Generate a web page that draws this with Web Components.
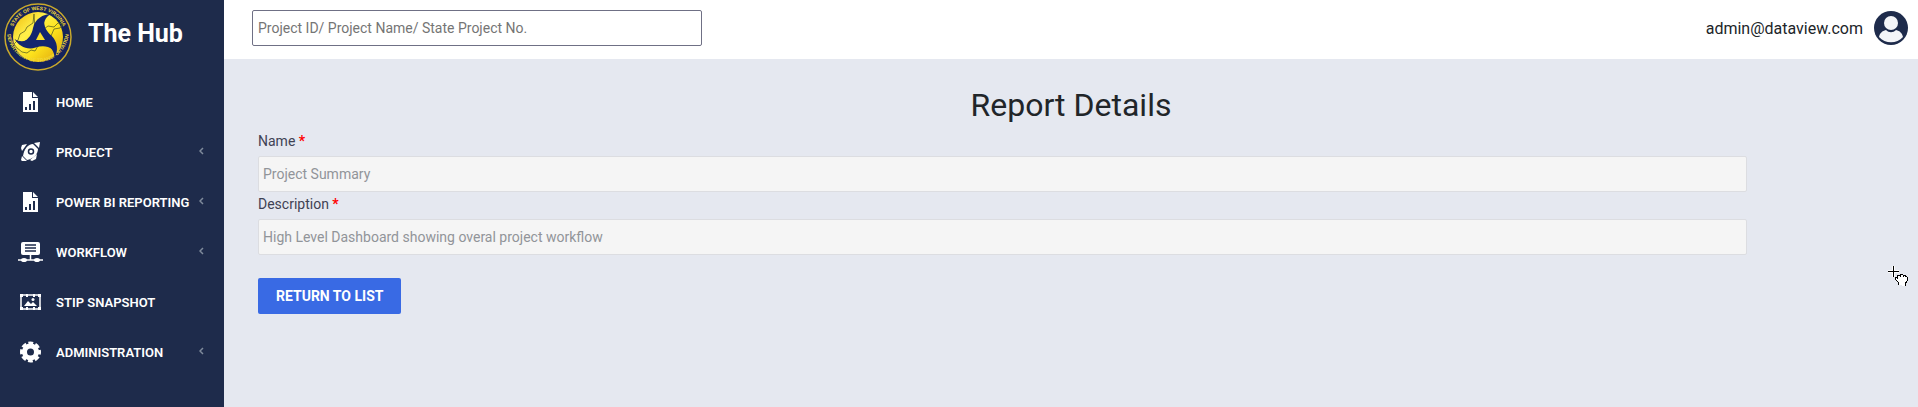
<!DOCTYPE html>
<html lang="en">
<head>
<meta charset="utf-8">
<meta name="viewport" content="width=device-width, initial-scale=1">
<title>The Hub - Report Details</title>
<style>
  body {
    margin: 0;
    font-family: Roboto, "Liberation Sans", sans-serif;
    font-size: 14px;
    color: #212529;
    background: #e5e8f0;
  }
</style>
</head>
<body>
<hub-app>
  <hub-sidebar slot="sidebar">
    <hub-nav-item icon="report">HOME</hub-nav-item>
    <hub-nav-item icon="rocket" expandable>PROJECT</hub-nav-item>
    <hub-nav-item icon="report" expandable>POWER BI REPORTING</hub-nav-item>
    <hub-nav-item icon="workflow" expandable>WORKFLOW</hub-nav-item>
    <hub-nav-item icon="snapshot">STIP SNAPSHOT</hub-nav-item>
    <hub-nav-item icon="gear" expandable>ADMINISTRATION</hub-nav-item>
  </hub-sidebar>
  <hub-topbar slot="topbar">admin@dataview.com</hub-topbar>
  <report-details>
    <hub-field label="Name" value="Project Summary"></hub-field>
    <hub-field label="Description" value="High Level Dashboard showing overal project workflow"></hub-field>
    <hub-button slot="actions">RETURN TO LIST</hub-button>
  </report-details>
  <hub-pointer></hub-pointer>
</hub-app>

<script>
class HubApp extends HTMLElement {
  constructor() {
    super();
    this.attachShadow({ mode: 'open' }).innerHTML = `
      <style>
        :host { display: flex; min-height: 100vh; }
        .body { flex: 1; min-width: 0; }
      </style>
      <slot name="sidebar"></slot>
      <div class="body">
        <slot name="topbar"></slot>
        <slot></slot>
      </div>
    `;
  }
}

// Round department seal: lettered ring, state outline and three-armed emblem
class HubSeal extends HTMLElement {
  constructor() {
    super();
    this.attachShadow({ mode: 'open' }).innerHTML = `
      <style>
        :host { display: block; }
        svg { display: block; }
        text { font: bold 5px "Liberation Sans", Arial, sans-serif; fill: #f2d93a; }
      </style>
      <svg width="68" height="68" viewBox="0 0 68 68" role="img" aria-label="Department seal">
        <defs>
          <linearGradient id="gold" x1="0" y1="0" x2="1" y2="1">
            <stop offset="0" stop-color="#eeb90a"/>
            <stop offset=".35" stop-color="#fff04a"/>
            <stop offset=".6" stop-color="#fde21c"/>
            <stop offset="1" stop-color="#dc9f0c"/>
          </linearGradient>
          <path id="top" d="M7 34a27 27 0 0 1 54 0"/>
          <path id="bottom" d="M3 28a31 31 0 1 0 62 0"/>
          <path id="arm" d="M11-23C3-23-5-18-7-9-8-3-11 2-17 5L-9 10C-1 6 5 0 4-8 3-14 5-20 11-23z"/>
        </defs>
        <circle cx="34" cy="34" r="33" fill="#14235a" stroke="#c9a92c" stroke-width="1.5"/>
        <circle cx="34" cy="34" r="25" fill="url(#gold)"/>
        <text><textPath href="#top" startOffset="50%" text-anchor="middle">STATE OF WEST VIRGINIA</textPath></text>
        <text><textPath href="#bottom" startOffset="50%" text-anchor="middle">DEPARTMENT OF TRANSPORTATION</textPath></text>
        <path d="M30 11l-1 9-6 4-2 4-5 3-2 6-4 4 3 4 5 4 5 1 4-3 4 1 3-5 6-2 3-6 4-2 3-7 6-1 3-4-5-1-4 4-6-1-4 3-9 1z" fill="none" stroke="#5f6421" stroke-width=".8"/>
        <g transform="translate(36 34)" fill="#13256f">
          <use href="#arm"/>
          <use href="#arm" transform="rotate(120)"/>
          <use href="#arm" transform="rotate(240)"/>
          <path d="M0-5L5 3-4 3z" fill="#fbe02a"/>
        </g>
      </svg>
    `;
  }
}

class HubSidebar extends HTMLElement {
  constructor() {
    super();
    this.attachShadow({ mode: 'open' }).innerHTML = `
      <style>
        :host { display: block; width: 224px; flex-shrink: 0; background: #1e2b4b; color: #fff; }
        .brand { display: flex; gap: 16px; padding: 3px 4px; }
        .name { font-size: 25px; line-height: 62px; font-weight: 700; }
        nav { padding-top: 3px; }
      </style>
      <div class="brand">
        <hub-seal></hub-seal>
        <div class="name">The Hub</div>
      </div>
      <nav><slot></slot></nav>
    `;
  }
}

const ICONS = {
  report: `<path fill="#fff" d="M7 2h9v6h6v14H7z M17 2l5 5h-5z"/>
    <path fill="#1e2b4b" d="M9 17h2v3H9z M13 14h2v6h-2z M17 11h2v9h-2z"/>`,
  rocket: `<g fill="#fff"><path d="M17 4l5 5c0 5-5 10-11 11l-4-4C8 9 12 4 17 4z"/>
    <path d="M18 3l6-1-1 6z"/>
    <path d="M6 5l5-1-5 7-1-3z M21 14l-1 5-4 2-2-1z M6 16l5 5-5 0-1-1z"/></g>
    <circle cx="15" cy="11.5" r="2.5" fill="none" stroke="#1e2b4b" stroke-width="1.5"/>`,
  workflow: `<rect x="5" y="2" width="19" height="13" rx="2" fill="#fff"/>
    <path d="M9 5h11M9 8h11M9 11h11" stroke="#1e2b4b" stroke-width="1.5"/>
    <path d="M14.5 15v5M2 20h25" stroke="#fff" stroke-width="1.5"/>
    <ellipse cx="8" cy="20" rx="3" ry="2" fill="#fff"/><ellipse cx="21" cy="20" rx="3" ry="2" fill="#fff"/>`,
  snapshot: `<rect x="5" y="5" width="19" height="14" fill="none" stroke="#fff" stroke-width="1.5"/>
    <path fill="#fff" d="M4 4h3v3H4z M22 4h3v3h-3z M4 17h3v3H4z M22 17h3v3h-3z M10 4h2v3h-2z M17 4h2v3h-2z M10 17h2v3h-2z M17 17h2v3h-2z"/>
    <path fill="#fff" d="M8 16l4-5 3 3 2-2 4 4z"/><circle cx="17" cy="9.5" r="1.5" fill="#fff"/>`,
  gear: `<circle cx="14.5" cy="12" r="6" fill="none" stroke="#fff" stroke-width="5"/>
    <circle cx="14.5" cy="12" r="8.5" fill="none" stroke="#fff" stroke-width="4" stroke-dasharray="4.5 2.175" stroke-dashoffset="2.25"/>`
};

class HubNavItem extends HTMLElement {
  connectedCallback() {
    const arrow = this.hasAttribute('expandable')
      ? '<svg class="arrow" width="5" height="8" viewBox="0 0 5 8"><path d="M4 1L1 4l3 3" fill="none" stroke="#7f8b9c" stroke-width="1.5"/></svg>'
      : '';
    this.attachShadow({ mode: 'open' }).innerHTML = `
      <style>
        :host { display: block; }
        a {
          display: flex;
          align-items: center;
          height: 50px;
          padding: 0 20px 0 16px;
          color: #fff;
          font-size: 13px;
          font-weight: 600;
          text-decoration: none;
          white-space: nowrap;
        }
        .icon { margin-right: 10px; flex-shrink: 0; }
        .arrow { margin-left: auto; padding-bottom: 2px; }
      </style>
      <a href="#">
        <svg class="icon" width="30" height="24" viewBox="0 0 30 24" aria-hidden="true">${ICONS[this.getAttribute('icon')]}</svg>
        <span><slot></slot></span>
        ${arrow}
      </a>
    `;
  }
}

class HubTopbar extends HTMLElement {
  constructor() {
    super();
    this.attachShadow({ mode: 'open' }).innerHTML = `
      <style>
        :host {
          display: flex;
          align-items: center;
          justify-content: space-between;
          box-sizing: border-box;
          height: 59px;
          padding: 0 10px 3px 28px;
          background: #fff;
        }
        input {
          box-sizing: border-box;
          width: 450px;
          height: 36px;
          padding: 0 5px;
          border: 1px solid #6f7085;
          border-radius: 2px;
          font: inherit;
        }
        input::placeholder { color: #757575; }
        .user { display: flex; align-items: center; gap: 11px; font-size: 16px; }
      </style>
      <input type="search" aria-label="Search projects" placeholder="Project ID/ Project Name/ State Project No.">
      <div class="user">
        <slot></slot>
        <svg width="34" height="34" viewBox="0 0 34 34" aria-hidden="true">
          <circle cx="17" cy="17" r="17" fill="#1e2b4b"/>
          <circle cx="17" cy="12" r="7" fill="#f4f5f8"/>
          <path d="M5 26c1-4 3-6 7-7 3 3 7 3 10 0 4 1 6 3 7 7-6 7-18 7-24 0z" fill="#f4f5f8"/>
        </svg>
      </div>
    `;
  }
}

class ReportDetails extends HTMLElement {
  constructor() {
    super();
    this.attachShadow({ mode: 'open' }).innerHTML = `
      <style>
        :host { display: block; padding-top: 26px; }
        h1 { margin: 0; font-size: 32px; line-height: 40px; font-weight: 400; text-align: center; }
        form { padding: 4px 171px 0 34px; }
        .actions { margin-top: 23px; }
      </style>
      <h1>Report Details</h1>
      <form>
        <slot></slot>
        <div class="actions"><slot name="actions"></slot></div>
      </form>
    `;
  }
}

class HubField extends HTMLElement {
  connectedCallback() {
    this.attachShadow({ mode: 'open' }).innerHTML = `
      <style>
        :host { display: block; }
        label { display: block; padding-bottom: 3px; line-height: 24px; color: #3f4254; }
        .required { color: #f00; font-weight: 700; }
        input {
          display: block;
          box-sizing: border-box;
          width: 100%;
          height: 36px;
          padding: 0 4px;
          border: 1px solid #dcdde1;
          border-radius: 2px;
          background: #f5f5f5;
          color: #919499;
          font: inherit;
        }
      </style>
      <label for="field">${this.getAttribute('label')} <span class="required">*</span></label>
      <input id="field" type="text" value="${this.getAttribute('value')}" disabled>
    `;
  }
}

class HubButton extends HTMLElement {
  constructor() {
    super();
    this.attachShadow({ mode: 'open' }).innerHTML = `
      <style>
        :host { display: inline-block; }
        button {
          display: block;
          height: 36px;
          padding: 0 18px;
          border: 0;
          border-radius: 2px;
          background: #396ae4;
          color: #fff;
          font: 700 14px Roboto, "Liberation Sans", sans-serif;
        }
      </style>
      <button type="button"><slot></slot></button>
    `;
  }
}

// Crosshair with a grabbing hand, floating over the page
class HubPointer extends HTMLElement {
  constructor() {
    super();
    this.attachShadow({ mode: 'open' }).innerHTML = `
      <style>
        :host { position: absolute; top: 265px; right: 9px; pointer-events: none; }
        svg { display: block; }
      </style>
      <svg width="22" height="21" viewBox="0 0 22 21" shape-rendering="crispEdges" aria-hidden="true">
        <path d="M1 6.5h11M6.5 1v11" stroke="#fff" stroke-width="3"/>
        <path d="M1 6.5h11M6.5 1v11" stroke="#000"/>
        <path d="M11 20v-3l-3-3v-2l2 1v-3h3l1-1 2 1h2l1 1 1 1v4l-2 3v2" fill="#fff" stroke="#000"/>
        <path d="M13 10v2M16 10v2M18 10v2" stroke="#000"/>
      </svg>
    `;
  }
}

customElements.define('hub-app', HubApp);
customElements.define('hub-seal', HubSeal);
customElements.define('hub-sidebar', HubSidebar);
customElements.define('hub-nav-item', HubNavItem);
customElements.define('hub-topbar', HubTopbar);
customElements.define('report-details', ReportDetails);
customElements.define('hub-field', HubField);
customElements.define('hub-button', HubButton);
customElements.define('hub-pointer', HubPointer);
</script>
</body>
</html>
